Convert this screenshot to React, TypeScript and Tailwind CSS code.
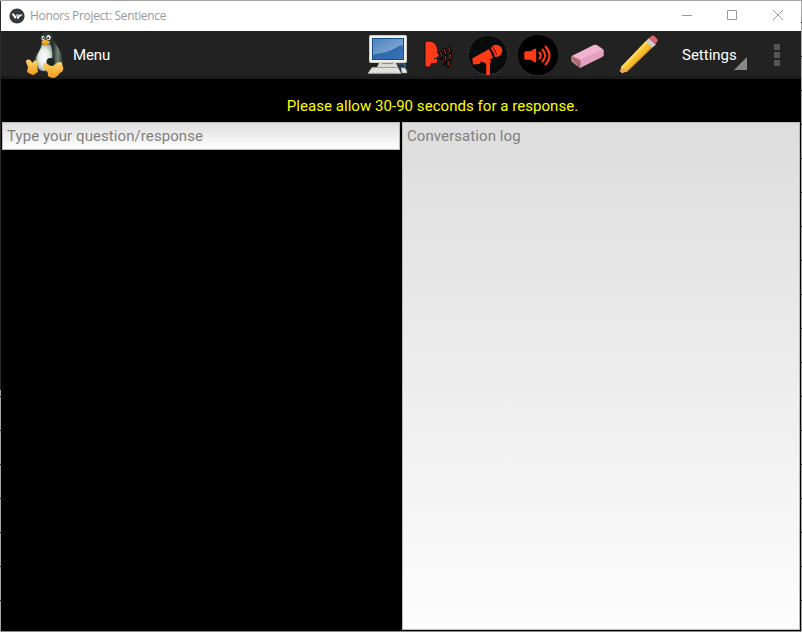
import React from "react";

const Tux = () => (
  <svg className="block h-[48px] w-[48px] shrink-0" viewBox="0 0 48 48">
    <defs>
      <linearGradient id="tuxBody" x1="0" y1="0" x2="1" y2="0">
        <stop offset="0" stopColor="#39443e" />
        <stop offset="0.66" stopColor="#2b332f" />
        <stop offset="0.82" stopColor="#71857a" />
        <stop offset="1" stopColor="#262c29" />
      </linearGradient>
      <radialGradient id="tuxBelly">
        <stop offset="0" stopColor="#ffffff" />
        <stop offset="0.65" stopColor="#e6eae6" />
        <stop offset="1" stopColor="#a9b5a9" />
      </radialGradient>
      <linearGradient id="tuxFoot" x1="0" y1="0" x2="0" y2="1">
        <stop offset="0" stopColor="#ffd468" />
        <stop offset="1" stopColor="#f59a1d" />
      </linearGradient>
    </defs>
    <path d="M21 8c-1-4 2-7 6-7 4 0 6 3 6 7 1 4 5 7 7 12 2 4 3 8 3 12l-5 5-12 4c-5 0-9-3-11-8-2-4 0-8 2-11 3-4 5-9 4-14z" fill="url(#tuxBody)" />
    <path d="M22 13c3 2 6 1 8 0 2 4 3 10 2 16-1 6-4 11-8 11-5 0-8-5-8-10 0-7 5-11 6-17z" fill="url(#tuxBelly)" />
    <ellipse cx="23" cy="7" rx="1.600" ry="2.200" fill="#ddd" />
    <ellipse cx="28.500" cy="6.500" rx="2.200" ry="2.600" fill="#f4f4f4" />
    <circle cx="23.300" cy="7.200" r="0.800" fill="#111" />
    <circle cx="28.200" cy="7" r="1" fill="#111" />
    <path d="M21.500 11c1-2 3-3 5-2l3.500 1.500c0 2-2 3.500-4.500 3.500-2 0-4-1-4-3z" fill="#f7b125" />
    <path d="M22 12c2 1 5 1 7-1" fill="none" stroke="#c57b10" strokeWidth="0.600" />
    <ellipse cx="30.500" cy="31" rx="4" ry="4" fill="#1d2420" />
    <path d="M6 30c0-1 3-2 4-1l3 3c0-2 2-3 4-2 1 1 0 3 0 5l1 6c-1 1-3 1-4 3-2 0-5-2-7-3 0-2 1-3 1-5-1-3-2-4-2-6z" fill="url(#tuxFoot)" />
    <path d="M23 34c0-2 2-3 4-1.500 2 2 4 2.500 5 2.500 3 0 4-4 8-4 3 0 2 3 3 5 1 3-1 5-3 6-2 2-3 4-6 5-2 0-5-1-6-2 0-4-1-5-3-7-1-1-2-2-2-4z" fill="url(#tuxFoot)" />
  </svg>
);

const Computer = () => (
  <svg className="block h-[42px] w-[42px]" viewBox="0 0 42 42">
    <defs>
      <linearGradient id="screen" x1="0" y1="0" x2="1" y2="1">
        <stop offset="0" stopColor="#2461a6" />
        <stop offset="1" stopColor="#3b73b4" />
      </linearGradient>
      <linearGradient id="gloss" x1="0" y1="0" x2="1" y2="1">
        <stop offset="0" stopColor="#4b83c0" />
        <stop offset="1" stopColor="#91b0d3" />
      </linearGradient>
    </defs>
    <rect x="2.500" y="1.500" width="37" height="27" rx="1" fill="#f1f1ec" stroke="#cfd0ca" />
    <rect x="5" y="4" width="32" height="22" fill="#174c8a" />
    <rect x="6" y="5" width="30" height="20" fill="url(#screen)" />
    <path d="M6 5h30v6c-6 1-8 4-14 6-5 2-10 2-16 4z" fill="url(#gloss)" />
    <path d="M12 29h17l2 4H10z" fill="#d8d9d3" />
    <path d="M15 29h11v1H15z" fill="#92958d" />
    <path d="M30 30h8v3h-6" fill="none" stroke="#4474a8" strokeWidth="1.200" />
    <path d="M5 33.500h26l3 6H1z" fill="#eff0eb" stroke="#a9ada3" strokeWidth="0.600" />
    <path d="M5 35h26M4 37h28M4 38.600h28" stroke="#b0b3ac" strokeWidth="0.800" strokeDasharray="1.500 1" />
    <path d="M34 34h4q2 2 2 5h-5z" fill="#e5e5df" stroke="#999" strokeWidth="0.500" />
  </svg>
);

const Speaking = () => (
  <svg className="block h-[42px] w-[42px]" viewBox="0 0 42 42" fill="none">
    <path d="M8 7.500c7-2 12 2 12.500 7.500v3l2 4-2 1v5l-1 1.500h-5l-1.500 3.500H8z" fill="#ff3a17" stroke="#060606" strokeWidth="0.800" />
    <path d="M17 24.500h4" stroke="#111" />
    <path d="M23.500 17q2.500 4.500 0 9M27 14q4 8 0 17M31.500 12.500q5 9-1 21" stroke="#050505" strokeWidth="3" />
    <path d="M23.500 18q2 3.500 0 7M27 15q3.500 7 0 14M31.500 13.500q4 8-1 19" stroke="#d82d19" strokeWidth="1" strokeDasharray="5 2" />
  </svg>
);

const Mic = () => (
  <svg className="block h-[42px] w-[42px]" viewBox="0 0 42 42">
    <circle cx="21" cy="21" r="19.600" fill="#080b0b" stroke="#555" strokeWidth="0.800" strokeDasharray="1.500 2" />
    <path d="M5.300 24.500L22 15q2.500 4 4 9l-4 1.500 2 1-1 3.500v11h-3.800V30l-1-1-4.200-1.500-1.500 2.500-6.500.500z" fill="#ff3a17" />
    <path d="M23.500 14q3-4 7-3c4 1 6 5 4 8.500-1 2-3 3.500-6.500 3.500q-1-5-4.500-9z" fill="#ff3a17" />
    <path d="M25 12.500q3.500 4 4.500 8" fill="none" stroke="#080b0b" strokeWidth="0.800" />
  </svg>
);

const Speaker = () => (
  <svg className="block h-[42px] w-[42px]" viewBox="0 0 42 42">
    <circle cx="21" cy="21" r="20" fill="#000" />
    <path d="M7.300 18.800q0-1.500 1.500-1.500h4.700l4-2.600h1.700v13.600h-1.700l-4-2.600H8.800q-1.500 0-1.500-1.500z" fill="#ff3a17" />
    <path d="M22.500 18.500q2.500 3 0 6M25.500 15.500q5 6 0 12M28.500 12.500q8 9 0 18" fill="none" stroke="#ff3a17" strokeWidth="2.100" strokeLinecap="round" />
  </svg>
);

const Eraser = () => (
  <svg className="block h-[42px] w-[42px]" viewBox="0 0 42 42">
    <path d="M4 23l2-1.500L27 11q1.500-.700 3 .300l6 4q.800.600.800 2v4q0 .700-2 2L15 33l-2 1z" fill="#e3a0c0" />
    <path d="M5 22L27 11q1.500-.700 3 .300l6 4.200-22.500 10z" fill="#efb3cf" />
    <path d="M4 24q0-2.500 2-1.500l6 3q2 1 2 3.500l-1 5-8-6q-1-1-1-4z" fill="#ad6a74" />
    <path d="M5 25l1 3 4 3" stroke="#dcaaa6" fill="none" strokeWidth="0.800" />
  </svg>
);

const Pencil = () => (
  <svg className="block h-[42px] w-[42px]" viewBox="0 0 42 42">
    <path d="M1.500 40.500l3-8 5.500 5z" fill="#e5a36f" />
    <path d="M1 41l1.500-4 2.500 2.500z" fill="#16120f" />
    <path d="M4 33L29 7l6.500 6L10 37.500l-2-.500-1-2-2.500-.500z" fill="#f7c030" />
    <path d="M4 33L29 7l2 2L6 34.500z" fill="#ffd750" />
    <path d="M8.500 37l25.500-25 1.500 1.300L10 37.800z" fill="#e9a520" />
    <path d="M28.500 7.500L32 4l7 6.500-3.500 3z" fill="#c9ced2" />
    <path d="M31.500 4.500l3-2.500q1.500-1 3 0l3 3.500q.800 1.500-.500 2.500l-2 2z" fill="#dd646a" />
  </svg>
);

const tools = [Computer, Speaking, Mic, Speaker, Eraser, Pencil];

export default function App() {
  return (
    <div className="h-[632px] w-[802px] overflow-hidden bg-black pt-px font-[Roboto,sans-serif] shadow-[inset_0_1px_0_#a5a5a5]">
      <div className="flex h-[631px]">
        <div className="flex w-px shrink-0 flex-col">
          <div className="h-[389px] bg-[#2b2b2b]" />
          <div className="flex-1 bg-[repeating-linear-gradient(to_bottom,#a5a5a5_0px,#a5a5a5_6px,#222_6px,#222_7px,#a5a5a5_7px,#a5a5a5_34px)]" />
        </div>
        <div className="flex w-[800px] shrink-0 flex-col border-b border-[#8a8a8a]">
          <header className="flex h-[30px] shrink-0 items-center bg-white pl-2">
            <svg className="h-4 w-4" viewBox="0 0 16 16">
              <circle cx="8" cy="8" r="7.600" fill="#35393c" />
              <path d="M2.500 5.500l2.500.300L6.500 8 8 6l1.500.800 4.500-.300-2 1.500-1.500 1-1.500 2.500L7.500 9 6 11z" fill="#fff" />
              <path d="M8 6.500L7.500 9l2-2" fill="none" stroke="#35393c" strokeWidth="0.500" />
            </svg>
            <span className="ml-[5px] font-['Open_Sans','Noto_Sans',sans-serif] text-[12px] tracking-[-0.330px] text-[#999]">Honors Project: Sentience</span>
            <svg className="ml-auto h-[30px] w-[138px]" viewBox="0 0 138 30" fill="none" stroke="#999">
              <path d="M19 14.500h10M64.500 9.500h9v9h-9zM110 9l10 10M120 9l-10 10" />
            </svg>
          </header>
          <nav className="flex h-12 shrink-0 items-center border-b-[3px] border-[#1b1b1b] bg-[#222] text-[15px] text-white">
            <div className="flex w-[362px] items-center pl-[19px] pt-[3px]">
              <Tux />
              <span className="ml-[5px] mt-px tracking-[-0.1px]">Menu</span>
            </div>
            <div className="flex gap-2 pl-[4px] pt-[3px]">
              {tools.map((Icon, i) => <Icon key={i} />)}
            </div>
            <span className="ml-[23px] pt-1">Settings</span>
            <svg className="-ml-[2px] h-[45px] w-[66px] overflow-visible" viewBox="0 0 66 45">
              <path d="M12 26v13H-1z" fill="#888" />
              <path d="M39 13h6v6h-6zM39 21h6v6h-6zM39 29h6v6h-6z" fill="#555" />
            </svg>
          </nav>
          <div className="flex h-[43px] shrink-0 items-center justify-center pl-[63px] pt-3 text-[15px] tracking-[0.045px] text-[#ff0]">
            Please allow 30-90 seconds for a response.
          </div>
          <main className="flex min-h-0 flex-1 gap-[2px] px-px text-[15px] tracking-[0.080px] text-[#808080]">
            <div className="h-7 w-[398px] border border-[#bbb] bg-linear-to-b from-[#ddd] to-white pl-1 leading-[26px]">
              Type your question/response
            </div>
            <div className="h-[508px] w-[398px] border border-[#bbb] bg-linear-to-b from-[#ddd] to-[#fdfdfd] pl-1 leading-[26px]">
              Conversation log
            </div>
          </main>
        </div>
        <div className="w-px shrink-0 bg-[repeating-linear-gradient(to_bottom,#a5a5a5_0px,#a5a5a5_21px,#111_21px,#111_22px,#a5a5a5_22px,#a5a5a5_34px)]" />
      </div>
    </div>
  );
}
